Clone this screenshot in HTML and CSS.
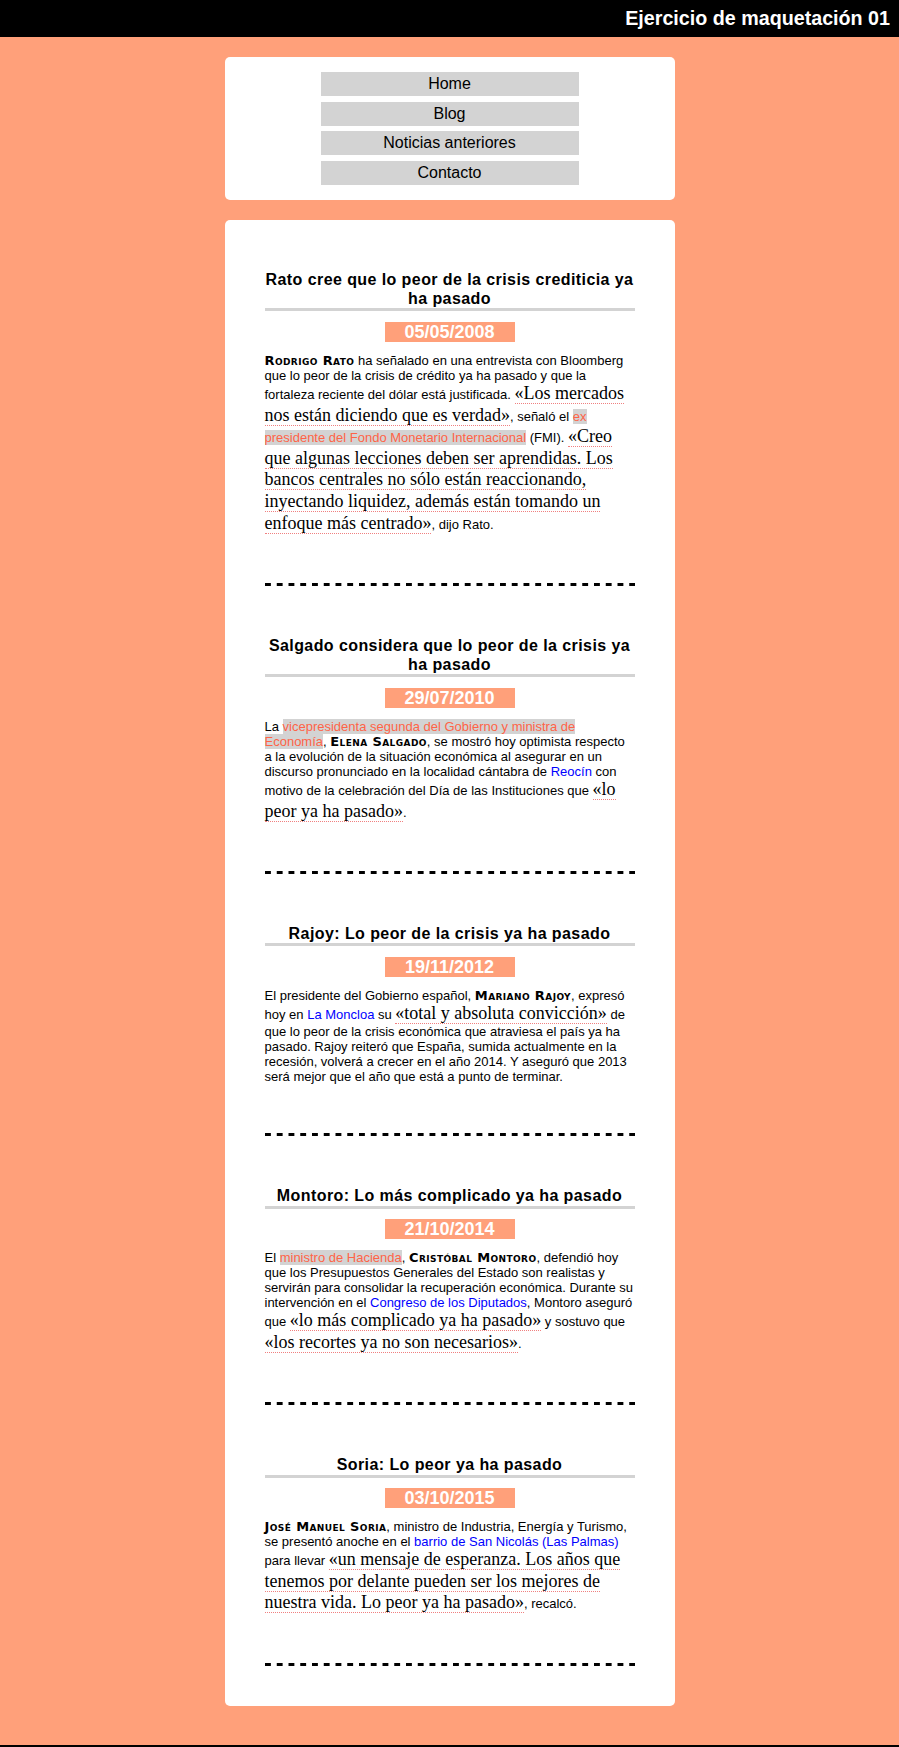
FILE: index.html
```html
<!DOCTYPE html>
<html lang="es">
<head>
<meta charset="utf-8">
<title>Ejercicio de maquetación 01</title>
<link rel="stylesheet" href="styles.css">
</head>
<body>
<header class="top">
  <h1 class="site-title">Ejercicio de maquetación 01</h1>
</header>

<nav class="card nav-card">
  <a class="nav-item" href="#">Home</a>
  <a class="nav-item" href="#">Blog</a>
  <a class="nav-item" href="#">Noticias anteriores</a>
  <a class="nav-item" href="#">Contacto</a>
</nav>

<main class="card main-card">
  <article class="news">
    <h2 class="news-title">Rato cree que lo peor de la crisis crediticia ya ha pasado</h2>
    <div class="news-date">05/05/2008</div>
    <p class="news-body"><span class="name">Rodrigo Rato</span> ha señalado en una entrevista con Bloomberg que lo peor de la crisis de crédito ya ha pasado y que la fortaleza reciente del dólar está justificada. <span class="quote">«Los mercados nos están diciendo que es verdad»</span>, señaló el <span class="term">ex presidente del Fondo Monetario Internacional</span> (FMI). <span class="quote">«Creo que algunas lecciones deben ser aprendidas. Los bancos centrales no sólo están reaccionando, inyectando liquidez, además están tomando un enfoque más centrado»</span>, dijo Rato.</p>
  </article>

  <article class="news">
    <h2 class="news-title">Salgado considera que lo peor de la crisis ya ha pasado</h2>
    <div class="news-date">29/07/2010</div>
    <p class="news-body">La <span class="term">vicepresidenta segunda del Gobierno y ministra de Economía</span>, <span class="name">Elena Salgado</span>, se mostró hoy optimista respecto a la evolución de la situación económica al asegurar en un discurso pronunciado en la localidad cántabra de <a class="place" href="#">Reocín</a> con motivo de la celebración del Día de las Instituciones que <span class="quote">«lo peor ya ha pasado»</span>.</p>
  </article>

  <article class="news">
    <h2 class="news-title">Rajoy: Lo peor de la crisis ya ha pasado</h2>
    <div class="news-date">19/11/2012</div>
    <p class="news-body">El presidente del Gobierno español, <span class="name">Mariano Rajoy</span>, expresó hoy en <a class="place" href="#">La Moncloa</a> su <span class="quote">«total y absoluta convicción»</span> de que lo peor de la crisis económica que atraviesa el país ya ha pasado. Rajoy reiteró que España, sumida actualmente en la recesión, volverá a crecer en el año 2014. Y aseguró que 2013 será mejor que el año que está a punto de terminar.</p>
  </article>

  <article class="news">
    <h2 class="news-title">Montoro: Lo más complicado ya ha pasado</h2>
    <div class="news-date">21/10/2014</div>
    <p class="news-body">El <span class="term">ministro de Hacienda</span>, <span class="name">Cristóbal Montoro</span>, defendió hoy que los Presupuestos Generales del Estado son realistas y servirán para consolidar la recuperación económica. Durante su intervención en el <a class="place" href="#">Congreso de los Diputados</a>, Montoro aseguró que <span class="quote">«lo más complicado ya ha pasado»</span> y sostuvo que <span class="quote">«los recortes ya no son necesarios»</span>.</p>
  </article>

  <article class="news">
    <h2 class="news-title">Soria: Lo peor ya ha pasado</h2>
    <div class="news-date">03/10/2015</div>
    <p class="news-body"><span class="name">José Manuel Soria</span>, ministro de Industria, Energía y Turismo, se presentó anoche en el <a class="place" href="#">barrio de San Nicolás (Las Palmas)</a> para llevar <span class="quote">«un mensaje de esperanza. Los años que tenemos por delante pueden ser los mejores de nuestra vida. Lo peor ya ha pasado»</span>, recalcó.</p>
  </article>
</main>

<footer class="bottom"></footer>
</body>
</html>
```

FILE: styles.css
```css
* {
  box-sizing: border-box;
}

body {
  margin: 0;
  background: #ffa07a;
  font-family: "Liberation Sans", Arial, sans-serif;
  color: #000;
}

.top {
  background: #000;
  padding: 7px 9px 7px 8px;
  text-align: right;
}

.site-title {
  margin: 0;
  color: #fff;
  font-size: 19.7px;
  line-height: 23px;
  font-weight: bold;
}

.card {
  width: 450px;
  margin: 20px auto 0;
  background: #fff;
  border-radius: 5px;
}

.nav-card {
  padding: 15px 0;
  display: flex;
  flex-direction: column;
  align-items: center;
  gap: 5.7px;
}

.nav-item {
  display: block;
  width: 258px;
  padding: 3px 0;
  background: #d3d3d3;
  color: #000;
  font-size: 16px;
  line-height: 18px;
  text-align: center;
  text-decoration: none;
}

.main-card {
  padding: 0 40px 40px;
  margin-bottom: 39px;
}

.news {
  padding: 50px 0 52px;
  background-image: linear-gradient(to right, #000 6px, transparent 6px);
  background-size: 11.75px 3px;
  background-repeat: repeat-x;
  background-position: left bottom;
}

.news-title {
  margin: 0;
  font-size: 16px;
  line-height: 1.2;
  letter-spacing: 0.42px;
  text-align: center;
  font-weight: bold;
  border-bottom: 3px solid #d3d3d3;
}

.news-date {
  width: 130px;
  margin: 10.5px auto 11px;
  background: #ffa07a;
  color: #fff;
  font-weight: bold;
  font-size: 18px;
  line-height: 20px;
  text-align: center;
}

.news-body {
  margin: 0;
  font-size: 13px;
  line-height: normal;
}

.name {
  font-family: "DejaVu Sans", Verdana, sans-serif;
  font-variant: small-caps;
  font-weight: bold;
  letter-spacing: 0.4px;
}

.term {
  background: #d3d3d3;
  color: #ff6347;
}

.place {
  color: #0000ff;
  text-decoration: none;
}

.quote {
  font-family: "Liberation Serif", "Times New Roman", serif;
  font-size: 18px;
  line-height: 1.2;
  border-bottom: 1px dotted #f08080;
}

.bottom {
  background: #000;
  height: 37px;
}
```
